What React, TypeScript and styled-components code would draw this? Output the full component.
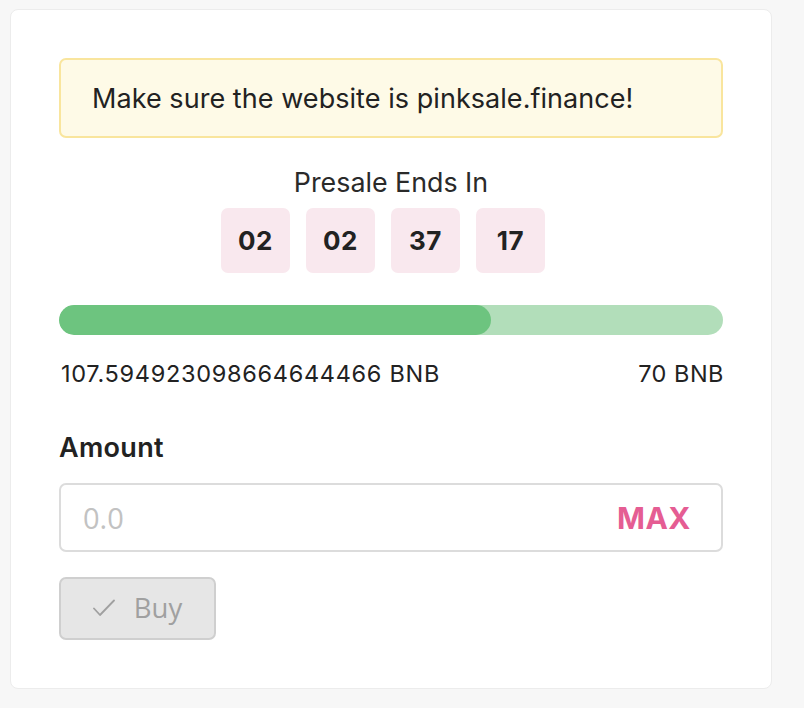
import React from "react";
import styled, { createGlobalStyle } from "styled-components";

const Global = createGlobalStyle`
  html, body { margin: 0; padding: 0; background: #f7f7f7; }
  body { font-family: Inter, "Noto Sans", sans-serif; color: #222; }
  * { box-sizing: border-box; }
`;

const Page = styled.div`
  padding: 9px 0 0 10px;
  width: 804px;
  height: 708px;
`;

const Card = styled.div`
  width: 762px;
  background: #fff;
  border: 1px solid #ececec;
  border-radius: 8px;
  padding: 48px;
  display: flex;
  flex-direction: column;
`;

const Alert = styled.div`
  height: 80px;
  display: flex;
  align-items: center;
  padding-left: 31px;
  background: #fefae7;
  border: 2px solid #f9e59d;
  border-radius: 7px;
  font-size: 27px;
  letter-spacing: 0.05px;
  color: #222;
`;

const Title = styled.div`
  margin-top: 28px;
  text-align: center;
  font-size: 26.8px;
  line-height: 32px;
  color: #2a2a2a;
`;

const Timer = styled.div`
  margin-top: 10px;
  display: flex;
  justify-content: center;
`;

const TimeBox = styled.div`
  width: 69px;
  height: 65px;
  margin-right: 16px;
  border-radius: 7px;
  background: #f9e8ee;
  display: flex;
  align-items: center;
  justify-content: center;
  font-size: 26px;
  font-weight: 700;
  letter-spacing: 0.6px;
  color: #222;
`;

const Track = styled.div`
  margin-top: 32px;
  height: 30px;
  border-radius: 15px;
  background: #b2deba;
  overflow: hidden;
`;

const Fill = styled.div`
  height: 100%;
  border-radius: 15px;
  background: #6dc47f;
`;

const Labels = styled.div`
  margin-top: 27px;
  padding-left: 2px;
  display: flex;
  justify-content: space-between;
  font-size: 23.5px;
  letter-spacing: 0.7px;
  line-height: 24px;
  color: #222;
`;

const Label = styled.div`
  white-space: nowrap;
  &:last-child { letter-spacing: 0.5px; margin-right: -1px; }
`;

const FieldLabel = styled.div`
  margin-top: 48px;
  font-size: 27px;
  font-weight: 600;
  letter-spacing: 0.3px;
  line-height: 28px;
  color: #222;
`;

const InputWrap = styled.div`
  margin-top: 21px;
  height: 69px;
  border: 2px solid #dcdcdc;
  border-radius: 7px;
  display: flex;
  align-items: center;
  padding: 0 30px 0 22px;
`;

const Input = styled.input`
  flex: 1;
  min-width: 0;
  border: none;
  outline: none;
  background: transparent;
  font-family: "Open Sans", sans-serif;
  font-size: 29px;
  color: #222;
  padding: 0;
  &::placeholder { color: #c2c2c2; }
`;

const Max = styled.span`
  font-size: 30px;
  font-weight: 700;
  color: #e55d93;
  letter-spacing: 0.5px;
`;

const BuyButton = styled.button`
  margin-top: 25px;
  width: 157px;
  height: 63px;
  border: 2px solid #cfcfcf;
  border-radius: 7px;
  background: #e6e6e6;
  display: flex;
  align-items: center;
  justify-content: center;
  gap: 19px;
  font-family: "Open Sans", sans-serif;
  font-size: 27.5px;
  color: #a0a0a0;
  padding: 0 0 2px 0;
  cursor: not-allowed;
`;

const values = ["02", "02", "37", "17"];

export default function App() {
  const pct = (431 / 663) * 100;
  return (
    <>
      <Global />
      <Page>
        <Card>
          <Alert>Make sure the website is pinksale.finance!</Alert>
          <Title>Presale Ends In</Title>
          <Timer>
            {values.map((v, i) => (
              <TimeBox key={i}>{v}</TimeBox>
            ))}
          </Timer>
          <Track>
            <Fill style={{ width: `${pct}%` }} />
          </Track>
          <Labels>
            <Label>107.594923098664644466 BNB</Label>
            <Label>70 BNB</Label>
          </Labels>
          <FieldLabel>Amount</FieldLabel>
          <InputWrap>
            <Input placeholder="0.0" />
            <Max>MAX</Max>
          </InputWrap>
          <BuyButton disabled>
            <svg width="22" height="18" viewBox="0 0 22 18" fill="none">
              <polyline points="1,9.5 7,16 21,1.5" stroke="#a0a0a0" strokeWidth="1.8" strokeLinecap="round" strokeLinejoin="round" />
            </svg>
            <span>Buy</span>
          </BuyButton>
        </Card>
      </Page>
    </>
  );
}
